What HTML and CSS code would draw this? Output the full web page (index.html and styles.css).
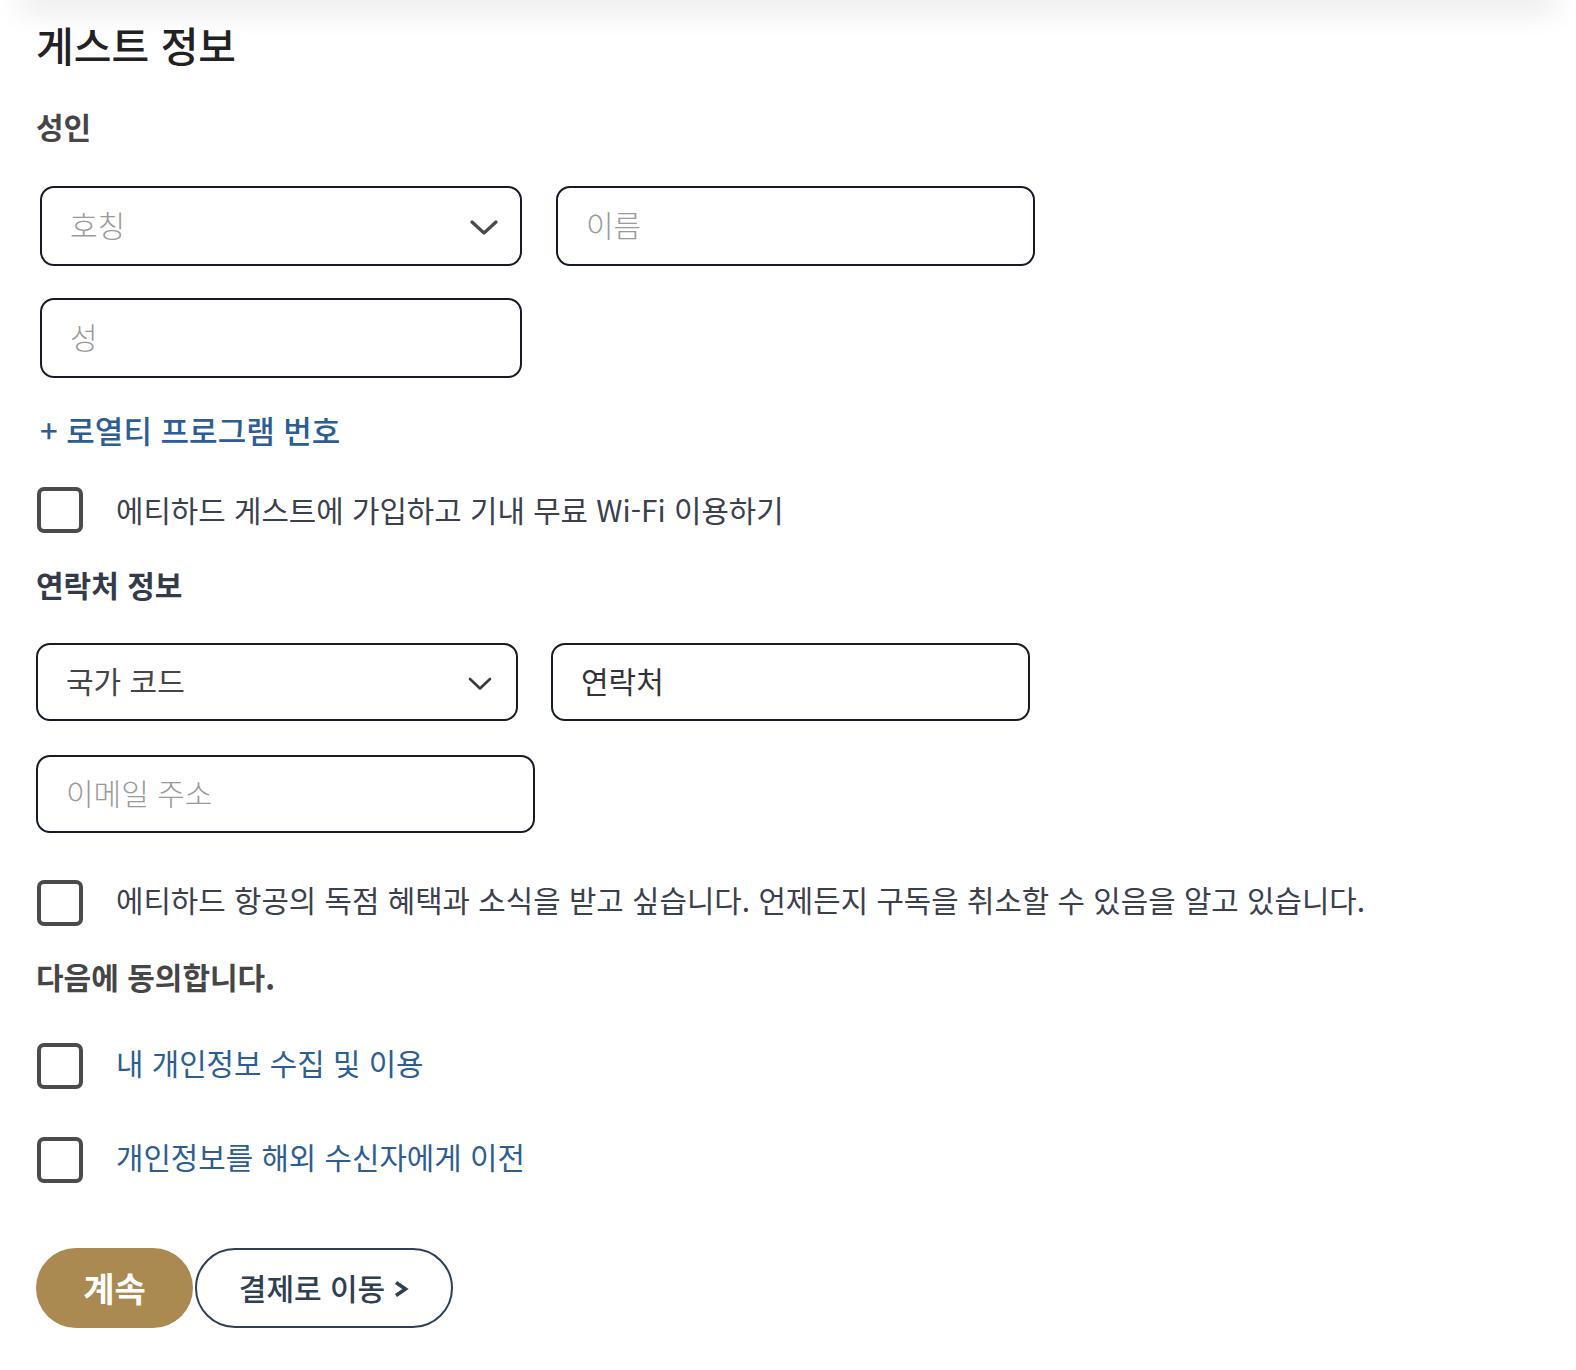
FILE: index.html
```html
<!DOCTYPE html>
<html lang="ko">
<head>
<meta charset="utf-8">
<title>게스트 정보</title>
<link rel="stylesheet" href="styles.css">
</head>
<body>
<div class="top-shadow"></div>
<main class="page">
  <h1 class="title">게스트 정보</h1>
  <h2 class="sub sub-gray">성인</h2>

  <div class="grid grid-a">
    <div class="field field-select">
      <span class="ph">호칭</span>
      <svg class="chev" width="28" height="16" viewBox="0 0 28 16"><path d="M2 2 L14 13 L26 2" fill="none" stroke="#4a4a4a" stroke-width="3.2" stroke-linecap="round" stroke-linejoin="round"/></svg>
    </div>
    <div class="field"><span class="ph">이름</span></div>
    <div class="field"><span class="ph">성</span></div>
  </div>

  <a class="loyalty" href="#">+ 로열티 프로그램 번호</a>

  <label class="check check-1">
    <span class="box"></span>
    <span class="check-text">에티하드 게스트에 가입하고 기내 무료 Wi-Fi 이용하기</span>
  </label>

  <h2 class="sub sub-slate">연락처 정보</h2>

  <div class="grid grid-b">
    <div class="field field-select field-b">
      <span class="val">국가 코드</span>
      <svg class="chev chev-sm" width="24" height="14" viewBox="0 0 24 14"><path d="M2 2 L12 11.5 L22 2" fill="none" stroke="#3a3a3a" stroke-width="2.6" stroke-linecap="round" stroke-linejoin="round"/></svg>
    </div>
    <div class="field field-b"><span class="val val-dark">연락처</span></div>
  </div>
  <div class="field field-b field-email"><span class="ph">이메일 주소</span></div>

  <label class="check check-2">
    <span class="box"></span>
    <span class="check-text raised">에티하드 항공의 독점 혜택과 소식을 받고 싶습니다. 언제든지 구독을 취소할 수 있음을 알고 있습니다.</span>
  </label>

  <h2 class="sub sub-gray agree">다음에 동의합니다.</h2>

  <label class="check check-3">
    <span class="box"></span>
    <span class="check-text link raised">내 개인정보 수집 및 이용</span>
  </label>
  <label class="check check-4">
    <span class="box"></span>
    <span class="check-text link raised">개인정보를 해외 수신자에게 이전</span>
  </label>

  <div class="actions">
    <button class="btn btn-gold">계속</button>
    <button class="btn btn-outline">결제로 이동 <svg class="arrow" width="16" height="18" viewBox="0 0 16 18"><path d="M3 2.5 L12.5 9 L3 15.5" fill="none" stroke="#2e4052" stroke-width="3.6" stroke-linejoin="miter"/></svg></button>
  </div>
</main>
</body>
</html>
```

FILE: styles.css
```css
* { box-sizing: border-box; }

html, body {
  margin: 0;
  padding: 0;
  background: #ffffff;
}

body {
  font-family: "Noto Sans CJK KR", "Noto Sans", sans-serif;
  color: #333;
}

.top-shadow {
  height: 0;
  margin: 0 30px;
  box-shadow: 0 0 30px 10px rgba(0, 0, 0, 0.11);
}

.page {
  padding: 0 36px 40px 36px;
  display: flex;
  flex-direction: column;
  align-items: flex-start;
}

.title {
  margin: 21px 0 0 0;
  font-size: 41px;
  line-height: 46px;
  font-weight: 500;
  color: #222222;
}

.sub {
  margin: 0;
  font-size: 30px;
  line-height: 40px;
  font-weight: 700;
}

.sub-gray { color: #464646; margin-top: 39px; }
.sub-slate { color: #343b48; margin-top: 31px; }
.sub.agree { margin-top: 30px; }

.grid {
  display: grid;
}

.grid-a {
  margin: 40px 0 0 4px;
  grid-template-columns: 482px 479px;
  column-gap: 34px;
  row-gap: 32px;
}

.grid-b {
  margin-top: 39px;
  grid-template-columns: 482px 479px;
  column-gap: 33px;
}

.field {
  height: 80px;
  border: 2px solid #151b27;
  border-radius: 14px;
  display: flex;
  align-items: center;
  padding: 0 20px 5px 28px;
  font-size: 30px;
  background: #fff;
}

.field-b {
  height: 78px;
}

.field-email {
  width: 499px;
  margin-top: 34px;
}

.field-select {
  justify-content: space-between;
}

.ph {
  color: #9a9a9a;
  font-weight: 300;
}

.val {
  color: #444444;
  font-weight: 400;
}

.val-dark {
  color: #333333;
}

.chev {
  display: block;
  margin-top: 9px;
  margin-right: 2px;
}

.chev-sm {
  margin-right: 4px;
}

.loyalty {
  margin: 32px 0 0 4px;
  font-size: 31px;
  line-height: 40px;
  color: #2c5e95;
  text-decoration: none;
  font-weight: 500;
}

.check {
  display: flex;
  align-items: center;
  gap: 33px;
  margin-left: 1px;
  cursor: pointer;
}

.check-1 { margin-top: 37px; }
.check-2 { margin-top: 47px; }
.check-3 { margin-top: 47px; }
.check-4 { margin-top: 48px; }

.box {
  width: 46px;
  height: 46px;
  border: 4px solid #4b4b4b;
  border-radius: 7px;
  flex: none;
}

.check-text {
  font-size: 29.8px;
  line-height: 40px;
  color: #3a404c;
  font-weight: 400;
  margin-bottom: 3px;
}

.check-text.raised {
  line-height: 36px;
  margin-bottom: 8px;
}

.check-text.link {
  color: #2c5e95;
}

.actions {
  display: flex;
  gap: 2px;
  margin-top: 65px;
}

.btn {
  height: 80px;
  border-radius: 40px;
  font-family: "Noto Sans CJK KR", "Noto Sans", sans-serif;
  display: flex;
  align-items: center;
  justify-content: center;
  cursor: pointer;
  padding-bottom: 3px;
}

.btn-gold {
  width: 157px;
  background: #aa8a51;
  border: none;
  color: #ffffff;
  font-size: 34px;
  font-weight: 700;
}

.btn-outline {
  width: 258px;
  background: #ffffff;
  border: 2px solid #2e4052;
  color: #2e4052;
  font-size: 30px;
  font-weight: 500;
  gap: 8px;
}

.arrow {
  display: block;
  margin-top: 4px;
}
```
